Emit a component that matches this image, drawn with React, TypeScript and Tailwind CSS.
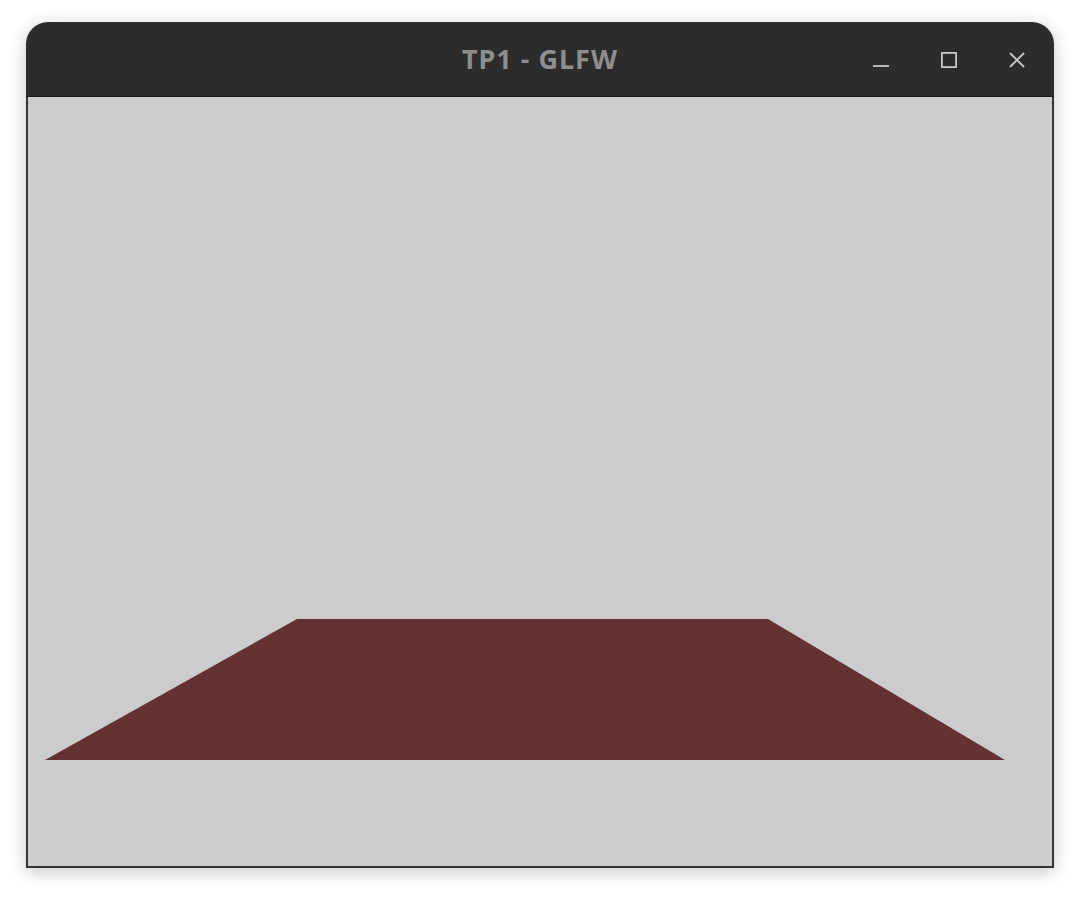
export default function App() {
  return (
    <main className="min-h-screen w-full bg-white pt-[22px] pl-[26px]">
      <div className="flex w-[1028px] flex-col rounded-t-[22px] shadow-[0_4px_18px_rgba(0,0,0,0.22)]">
        <div className="relative flex h-[75px] items-center justify-center rounded-t-[22px] border-b border-[#161616] bg-[#2c2c2c]">
          <span className="font-['Noto_Sans',sans-serif] text-[27px] font-bold tracking-[1px] text-[#8e8e8e]">TP1 - GLFW</span>
          <div className="absolute right-[28px] top-[29px] flex items-center gap-[50px]">
            <svg width="18" height="18" viewBox="0 0 18 18" className="ml-[2px]">
              <line x1="1" y1="15" x2="17" y2="15" stroke="#c8c8c8" strokeWidth="1.8" />
            </svg>
            <svg width="18" height="18" viewBox="0 0 18 18">
              <rect x="1.9" y="1.9" width="14.2" height="14.2" fill="none" stroke="#c8c8c8" strokeWidth="1.8" />
            </svg>
            <svg width="18" height="18" viewBox="0 0 18 18">
              <path d="M2 2 L16 16 M16 2 L2 16" stroke="#c8c8c8" strokeWidth="1.9" />
            </svg>
          </div>
        </div>
        <div className="h-[771px] border-x-2 border-b-2 border-[#333333] bg-[#cccccc]">
          <svg width="1024" height="769" viewBox="0 0 1024 769" className="block">
            <polygon points="17,663 269,522 740,522 977,663" fill="#643232" />
          </svg>
        </div>
      </div>
    </main>
  );
}
